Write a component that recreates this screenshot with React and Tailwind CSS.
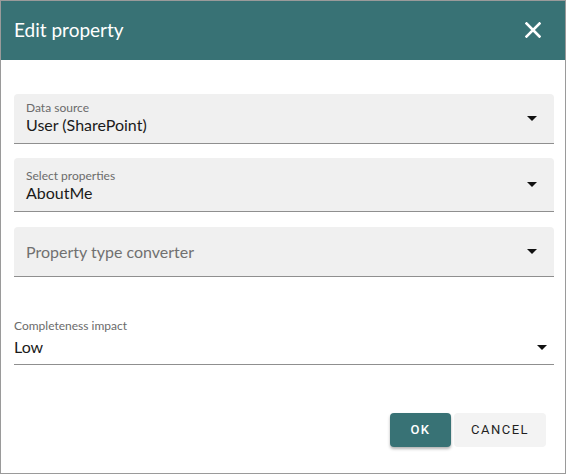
import React from "react";

const Arrow = () => (
  <svg width="10" height="5" viewBox="0 0 10 5" className="block">
    <path d="M0 0 L10 0 L5 5 Z" fill="#111" />
  </svg>
);

export default function App() {
  const font = { fontFamily: "Lato, 'Noto Sans', sans-serif" };
  return (
    <div className="w-[566px] h-[474px] border border-[#9a9a9a] bg-white flex flex-col" style={font}>
      <div className="h-[59px] bg-[#387275] flex items-center justify-between pl-[13px] pr-[24px] pb-[2px] shrink-0">
        <span className="text-white text-[19px] leading-none">Edit property</span>
        <svg width="16" height="16" viewBox="0 0 16 16">
          <path d="M1.5 1.5 L14.5 14.5 M14.5 1.5 L1.5 14.5" stroke="white" strokeWidth="2.6" strokeLinecap="square" />
        </svg>
      </div>
      <div className="flex flex-col pl-[13px] pr-[11px] pt-[34px]">
        <div className="h-[50px] bg-[#f0f0f0] rounded-t-[4px] border-b border-[#8f8f8f] flex items-center pl-[12px] pr-[17px]">
          <div className="flex-1 flex flex-col pb-[2px]">
            <span className="text-[12px] leading-[14px] text-[#6b6b6b]">Data source</span>
            <span className="text-[16px] leading-[19px] text-[#1a1a1a]">User (SharePoint)</span>
          </div>
          <Arrow />
        </div>
        <div className="mt-[14px] h-[54px] bg-[#f0f0f0] rounded-t-[4px] border-b border-[#8f8f8f] flex items-center pl-[12px] pr-[17px]">
          <div className="flex-1 flex flex-col pt-[2px]">
            <span className="text-[12px] leading-[14px] text-[#6b6b6b]">Select properties</span>
            <span className="text-[16px] leading-[19px] text-[#1a1a1a]">AboutMe</span>
          </div>
          <Arrow />
        </div>
        <div className="mt-[15px] h-[50px] bg-[#f0f0f0] rounded-t-[4px] border-b border-[#8f8f8f] flex items-center pl-[12px] pr-[17px]">
          <span className="flex-1 text-[16px] leading-[19px] text-[#707070]">Property type converter</span>
          <Arrow />
        </div>
        <div className="mt-[44px] h-[44px] border-b border-[#8f8f8f] flex items-end pb-[8px] pr-[7px]">
          <div className="flex-1 flex flex-col">
            <span className="text-[12px] leading-[14px] text-[#6b6b6b]">Completeness impact</span>
            <span className="mt-[4px] text-[16px] leading-[19px] text-[#1a1a1a]">Low</span>
          </div>
          <div className="pb-[6px]"><Arrow /></div>
        </div>
      </div>
      <div className="flex justify-end gap-[3px] pr-[19px] mt-[48px]">
        <button className="w-[61px] h-[34px] rounded-[4px] bg-[#387275] text-white text-[13px] font-medium tracking-[1.5px] shadow-[0_2px_3px_rgba(0,0,0,0.3)]" style={{ fontFamily: "Roboto, sans-serif" }}>OK</button>
        <button className="w-[92px] h-[34px] rounded-[4px] bg-[#f3f3f3] text-[#1f1f1f] text-[13px] tracking-[1.5px]" style={{ fontFamily: "Roboto, sans-serif" }}>CANCEL</button>
      </div>
    </div>
  );
}
